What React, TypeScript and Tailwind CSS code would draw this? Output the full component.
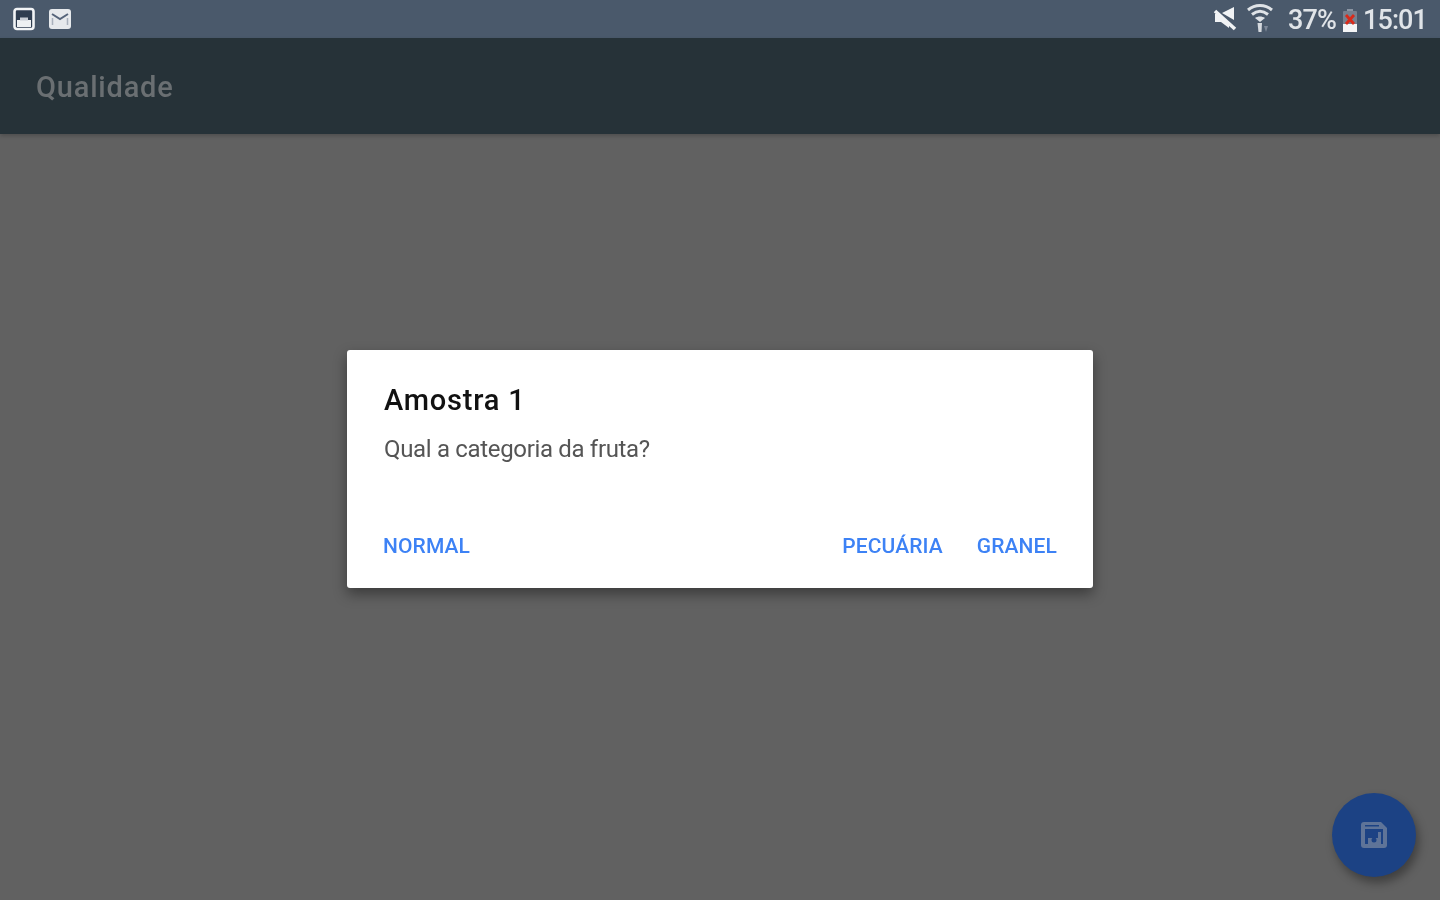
function ImageNote() {
  return (
    <svg width="24" height="26" viewBox="0 0 24 26" className="blur-[0.7px]">
      <rect x="2.5" y="3" width="19" height="20" rx="2.5" fill="#2f3d50" stroke="#f2f4f6" strokeWidth="2.6" />
      <rect x="5" y="14" width="14" height="7" fill="#eef0f2" />
      <rect x="8" y="11.500" width="8" height="3" fill="#c9ced6" />
    </svg>
  );
}

function MailNote() {
  return (
    <svg width="24" height="22" viewBox="0 0 24 22" className="blur-[0.7px]">
      <rect x="1" y="1" width="22" height="20" rx="3" fill="#e6e9ec" />
      <path d="M4 6l8 5 8-5" fill="none" stroke="#55647a" strokeWidth="2" />
      <path d="M4.500 10v7M19.500 10v7" stroke="#a9b1bc" strokeWidth="1.500" />
    </svg>
  );
}

function MuteIcon() {
  return (
    <svg width="26" height="26" viewBox="0 0 26 26" className="blur-[0.6px]">
      <path d="M22 1v13L10 7z" fill="#f1f3f5" />
      <path d="M3 8h5l9 11v3l-8-6H3z" fill="#f1f3f5" />
      <path d="M3 5l20 18" stroke="#f1f3f5" strokeWidth="3.600" />
    </svg>
  );
}

function WifiIcon() {
  return (
    <svg width="26" height="30" viewBox="0 0 26 30" className="blur-[0.6px]">
      <path d="M1 7c7-6 17-6 24 0" fill="none" stroke="#dfe3e7" strokeWidth="3" />
      <path d="M5 11.500c5-4 11-4 16 0" fill="none" stroke="#dfe3e7" strokeWidth="3" />
      <path d="M8 15c3-2 7-2 10 0l-5 4z" fill="#dfe3e7" />
      <path d="M10.500 20h4.500l-.5 9h-3z" fill="#d5d9de" />
      <path d="M17 23h4l-2 6z" fill="#7d8898" />
    </svg>
  );
}

function BatteryIcon() {
  return (
    <svg width="16" height="23" viewBox="0 0 16 23" className="blur-[0.6px]">
      <rect x="5" y="0" width="6" height="2" fill="#8b95a3" />
      <rect x="1" y="2" width="14" height="21" rx="1" fill="#76808f" />
      <rect x="1" y="15" width="14" height="8" fill="#f4f5f6" />
      <path d="M4 6l8 9M12 6l-8 9" stroke="#d92a1a" strokeWidth="2.800" />
    </svg>
  );
}

function FabSave() {
  return (
    <svg width="30" height="30" viewBox="0 0 30 30" fill="none" className="blur-[0.6px]">
      <path d="M5 2h17l6 6v17a3 3 0 0 1-3 3H5a3 3 0 0 1-3-3V5a3 3 0 0 1 3-3z" fill="#5f7498" />
      <rect x="6" y="9" width="18" height="15" fill="#1c4284" />
      <rect x="6" y="5" width="14" height="1.500" fill="#1c4284" />
      <path d="M9 24v-6h10v-6h3v12z" fill="#5f7498" />
      <circle cx="15" cy="20" r="2.500" fill="#1c4284" />
    </svg>
  );
}

function DialogButton({ label }: { label: string }) {
  return <button className="text-[21px] leading-[28px] font-medium text-[#3d82f5] tracking-[0.1px] blur-[0.5px]">{label}</button>;
}

export default function App() {
  return (
    <div className="h-screen w-full flex flex-col overflow-hidden bg-[#616161] font-['Roboto',sans-serif] relative">
      <div className="h-[38px] shrink-0 bg-[#4a596b] flex items-center justify-between pl-[12px] pr-[13px]">
        <div className="flex items-center gap-[12px]">
          <ImageNote />
          <MailNote />
        </div>
        <div className="flex items-center text-[#e0e4e8] text-[27px] leading-none tracking-[-0.9px] font-medium pt-[3px]">
          <span className="-mt-[4px]"><MuteIcon /></span>
          <span className="ml-[9px] -mt-[5px]"><WifiIcon /></span>
          <span className="ml-[15px] blur-[0.6px]">37%</span>
          <span className="ml-[6px]"><BatteryIcon /></span>
          <span className="ml-[5px] blur-[0.6px]">15:01</span>
        </div>
      </div>

      <div className="h-[96px] shrink-0 bg-[#263238] flex items-center pl-[36px] pt-[3px] shadow-[0_2px_4px_rgba(0,0,0,0.2)]">
        <h1 className="text-[29px] font-medium text-[#6a6f72] tracking-[0.8px] blur-[0.6px]">Qualidade</h1>
      </div>

      <div className="flex-1 flex justify-center pt-[216px]">
        <div className="w-[746px] h-[238px] bg-white rounded-[3px] shadow-[0_6px_14px_rgba(0,0,0,0.4)] flex flex-col pt-[32px] pl-[36px] pr-[36px] pb-[28px]">
          <h2 className="ml-[1px] text-[29px] leading-[36px] font-medium text-[#111111] tracking-[0.8px] blur-[0.5px]">Amostra 1</h2>
          <p className="mt-[15px] ml-[1px] text-[24px] leading-[32px] text-[#555555] tracking-[-0.33px] blur-[0.5px]">Qual a categoria da fruta?</p>
          <div className="mt-auto flex items-center">
            <DialogButton label="NORMAL" />
            <div className="ml-auto flex items-center gap-[34px]">
              <DialogButton label="PECUÁRIA" />
              <DialogButton label="GRANEL" />
            </div>
          </div>
        </div>
      </div>

      <button className="absolute right-[24px] bottom-[23px] w-[84px] h-[84px] rounded-full bg-[#1c4284] shadow-[3px_6px_10px_rgba(0,0,0,0.35)] flex items-center justify-center">
        <FabSave />
      </button>
    </div>
  );
}
